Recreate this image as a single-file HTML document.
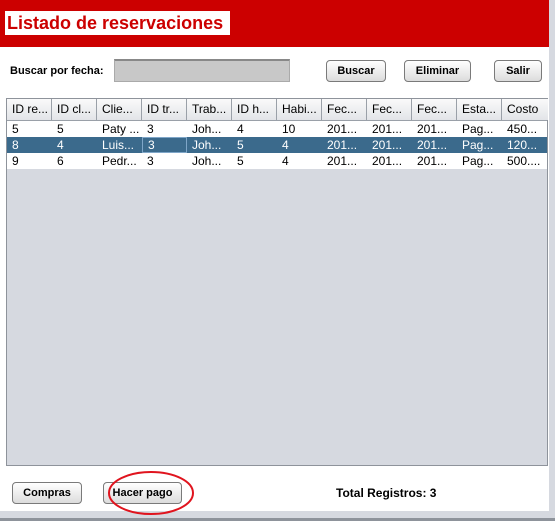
<!DOCTYPE html>
<html><head><meta charset="utf-8"><style>
*{margin:0;padding:0;box-sizing:border-box}
body{width:555px;height:521px;background:#fff;position:relative;overflow:hidden;font-family:"Liberation Sans",Arial,sans-serif;font-size:12px;color:#000}
.abs{position:absolute}
.hdr{left:0;top:0;width:549px;height:47px;background:#cc0000}
.title{left:5px;top:11px;width:225px;height:24px;background:#fff;color:#cc0000;font-weight:bold;font-size:18px;line-height:24px;padding-left:2px;white-space:nowrap;overflow:hidden}
.btn{position:absolute;border:1px solid #7a7a7a;border-radius:4px;background:linear-gradient(#fff,#dcdcdc);font-weight:bold;font-size:11px;text-align:center;line-height:20px;height:22px}
.tbl{left:6px;top:98px;width:542px;height:368px;border:1px solid #8e939b;background:#d6d9e0}
.row{position:absolute;left:0;width:540px;height:16px;background:#fff}
.cell{position:absolute;top:0;width:45px;padding-left:5px;white-space:nowrap;overflow:hidden;font-size:12px;line-height:16px}
.hcell{position:absolute;top:0;width:45px;height:21px;border-right:1px solid #9aa0a8;padding-left:5px;line-height:21px;background:linear-gradient(#fafafa,#e2e4e8);font-size:12px;white-space:nowrap;overflow:hidden}
</style></head><body>
<div class="abs hdr"></div>
<div class="abs title">Listado de reservaciones</div>
<div class="abs" style="left:10px;top:65px;font-weight:bold;font-size:11px">Buscar por fecha:</div>
<div class="abs" style="left:114px;top:59px;width:176px;height:23px;background:#c8c8c8;border:1px solid #aaa;border-top:2px solid #888"></div>
<div class="btn" style="left:326px;top:60px;width:60px">Buscar</div>
<div class="btn" style="left:404px;top:60px;width:67px">Eliminar</div>
<div class="btn" style="left:494px;top:60px;width:48px">Salir</div>
<div class="abs tbl">
<div class="row" style="top:0;height:22px;background:linear-gradient(#fafafa,#e2e4e8);border-bottom:1px solid #9aa0a8">
<div class="hcell" style="left:0">ID re...</div><div class="hcell" style="left:45px">ID cl...</div><div class="hcell" style="left:90px">Clie...</div><div class="hcell" style="left:135px">ID tr...</div><div class="hcell" style="left:180px">Trab...</div><div class="hcell" style="left:225px">ID h...</div><div class="hcell" style="left:270px">Habi...</div><div class="hcell" style="left:315px">Fec...</div><div class="hcell" style="left:360px">Fec...</div><div class="hcell" style="left:405px">Fec...</div><div class="hcell" style="left:450px">Esta...</div><div class="hcell" style="left:495px;width:46px;border-right:none">Costo</div>
</div>
<div class="row" style="top:22px"><div class="cell" style="left:0">5</div><div class="cell" style="left:45px">5</div><div class="cell" style="left:90px">Paty ...</div><div class="cell" style="left:135px">3</div><div class="cell" style="left:180px">Joh...</div><div class="cell" style="left:225px">4</div><div class="cell" style="left:270px">10</div><div class="cell" style="left:315px">201...</div><div class="cell" style="left:360px">201...</div><div class="cell" style="left:405px">201...</div><div class="cell" style="left:450px">Pag...</div><div class="cell" style="left:495px">450...</div></div>
<div class="row" style="top:38px;background:#3b6a8c;color:#fff"><div class="cell" style="left:0">8</div><div class="cell" style="left:45px">4</div><div class="cell" style="left:90px">Luis...</div><div class="cell" style="left:135px;border:1px solid #7fa6c8;line-height:14px">3</div><div class="cell" style="left:180px">Joh...</div><div class="cell" style="left:225px">5</div><div class="cell" style="left:270px">4</div><div class="cell" style="left:315px">201...</div><div class="cell" style="left:360px">201...</div><div class="cell" style="left:405px">201...</div><div class="cell" style="left:450px">Pag...</div><div class="cell" style="left:495px">120...</div></div>
<div class="row" style="top:54px"><div class="cell" style="left:0">9</div><div class="cell" style="left:45px">6</div><div class="cell" style="left:90px">Pedr...</div><div class="cell" style="left:135px">3</div><div class="cell" style="left:180px">Joh...</div><div class="cell" style="left:225px">5</div><div class="cell" style="left:270px">4</div><div class="cell" style="left:315px">201...</div><div class="cell" style="left:360px">201...</div><div class="cell" style="left:405px">201...</div><div class="cell" style="left:450px">Pag...</div><div class="cell" style="left:495px">500....</div></div>
</div>
<div class="btn" style="left:12px;top:482px;width:70px">Compras</div>
<div class="btn" style="left:103px;top:482px;width:79px">Hacer pago</div>
<div class="abs" style="left:336px;top:486px;font-weight:bold;font-size:12px">Total Registros: 3</div>
<div class="abs" style="left:549px;top:0;width:6px;height:521px;background:#d6d9e0"></div>
<div class="abs" style="left:0;top:511px;width:555px;height:10px;background:#d6d9e0"></div>
<div class="abs" style="left:0;top:518px;width:555px;height:3px;background:#8e939b"></div>
<svg class="abs" style="left:100px;top:467px" width="100" height="50"><ellipse cx="51" cy="26" rx="42" ry="21" fill="none" stroke="#e0141e" stroke-width="2"/></svg>
</body></html>
